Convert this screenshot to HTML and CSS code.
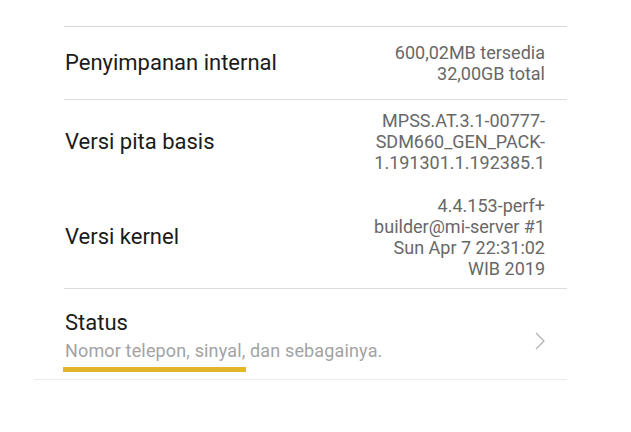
FILE: index.html
```html
<!DOCTYPE html>
<html lang="id">
<head>
  <meta charset="UTF-8" />
  <meta name="viewport" content="width=device-width, initial-scale=1" />
  <title>Tentang ponsel</title>
  <link rel="stylesheet" href="styles.css">
</head>
<body>

  <main class="settings">
    <div class="row first">
      <span class="label">Penyimpanan internal</span>
      <span class="value">600,02MB tersedia<br>32,00GB total</span>
    </div>

    <div class="row plain">
      <span class="label">Versi pita basis</span>
      <span class="value">MPSS.AT.3.1-00777-<br>SDM660_GEN_PACK-<br>1.191301.1.192385.1</span>
    </div>

    <div class="row kernel">
      <span class="label">Versi kernel</span>
      <span class="value">4.4.153-perf+<br>builder@mi-server #1<br>Sun Apr 7 22:31:02<br>WIB 2019</span>
    </div>

    <div class="row status">
      <div class="status-text">
        <span class="label">Status</span>
        <span class="sub">Nomor telepon, sinyal, dan sebagainya.</span>
        <div class="highlight"></div>
      </div>
      <svg class="chevron" width="10" height="18" viewBox="0 0 10 18">
        <path d="M1 1 L9 9 L1 17" fill="none" stroke="#b3b3b3" stroke-width="1.3" />
      </svg>
    </div>
  </main>

  <div class="list-end"></div>

</body>
</html>
```

FILE: styles.css
```css
body {
  margin: 0;
  background: #ffffff;
  font-family: Roboto, 'Noto Sans', sans-serif;
  color: #1b1b1b;
}
.settings {
  margin: 26px 0 0 64px;
  width: 503px;
}
.row {
  display: flex;
  justify-content: space-between;
  align-items: center;
  padding: 10px 22px 11px 1px;
  border-bottom: 1px solid #dcdcdc;
  box-sizing: border-box;
}
.row.first {
  border-top: 1px solid #d6d6d6;
  min-height: 74px;
}
.row.plain {
  border-bottom: none;
}
.row.kernel {
  padding-top: 11px;
  padding-bottom: 9px;
}
.label {
  font-size: 22px;
  line-height: 26px;
}
.value {
  font-size: 18px;
  line-height: 21px;
  color: #686868;
  text-align: right;
}
.row.status {
  border-bottom: none;
  padding-top: 21px;
  padding-bottom: 7px;
}
.status-text {
  display: flex;
  flex-direction: column;
}
.sub {
  font-size: 18px;
  line-height: 21px;
  letter-spacing: 0.15px;
  margin-top: 4px;
  color: #a3a3a3;
}
.highlight {
  margin: 6px 0 0 -2px;
  width: 183px;
  height: 5px;
  background: #e2b52b;
}
.list-end {
  margin-left: 34px;
  width: 533px;
  border-top: 1px solid #ececec;
}
```
